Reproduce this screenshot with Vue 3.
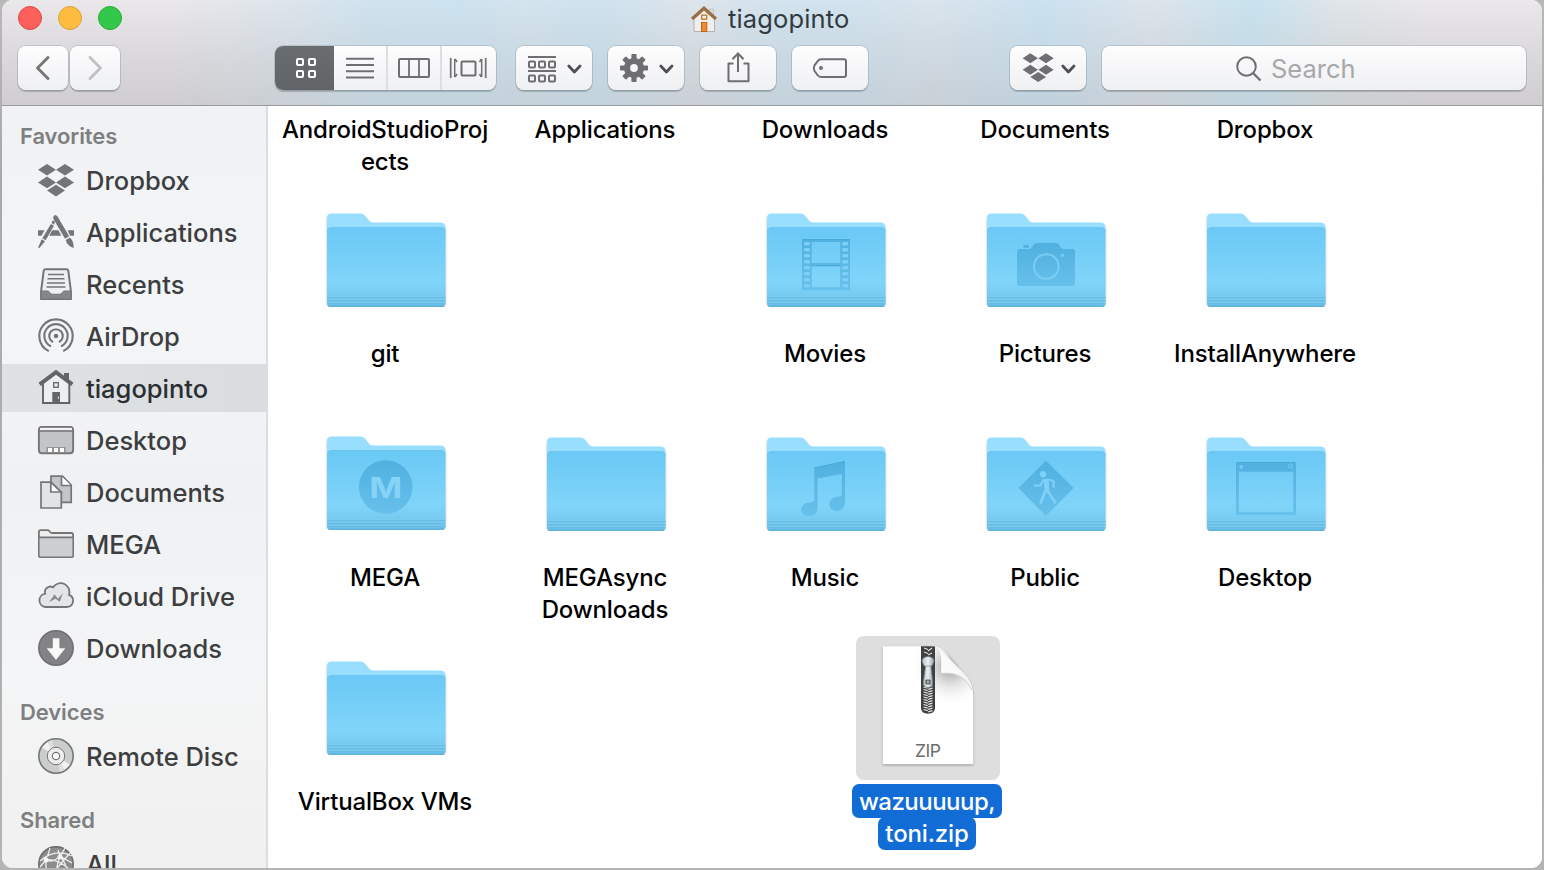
<script setup>
const rhomb = (x, y, w, h) => `M${x - w} ${y}L${x} ${y - h}L${x + w} ${y}L${x} ${y + h}Z`
const chevron = (x) => `<path d="M${x} 20l5.6 6 5.6-6" fill="none" stroke="#505052" stroke-width="2.8" stroke-linecap="round" stroke-linejoin="round"/>`
const cells = (xs, ys, s, color, w) => ys.map((y) => xs.map((x) => `<rect x="${x}" y="${y}" width="${s}" height="${s}" rx="1" fill="none" stroke="${color}" stroke-width="${w}"/>`).join('')).join('')
const teeth = [0, 45, 90, 135, 180, 225, 270, 315].map((a) => `<rect x="23.4" y="8" width="5.2" height="8" rx=".8" transform="rotate(${a} 26 22)"/>`).join('')

const G = '#6f6f71'
const tools = {
  back: `<path d="M30 11.500L19.500 22L30 32.500" fill="none" stroke="#777" stroke-width="3" stroke-linecap="round" stroke-linejoin="round"/>`,
  forward: `<path d="M20 11.500L30.500 22L20 32.500" fill="none" stroke="#c2c2c4" stroke-width="3" stroke-linecap="round" stroke-linejoin="round"/>`,
  grid: cells([22, 34], [13, 25], 6, '#fff', 2),
  list: `<path d="M12 12.800h28M12 19h28M12 25.200h28M12 31.400h28" stroke="${G}" stroke-width="2"/>`,
  columns: `<rect x="11" y="13" width="30" height="18" rx="1" fill="none" stroke="${G}" stroke-width="2"/><path d="M21 13v18M31 13v18" stroke="${G}" stroke-width="1.8"/>`,
  flow: `<g fill="none" stroke="${G}" stroke-width="2"><rect x="20.500" y="15.500" width="14" height="14" rx="1"/><path d="M9.700 12v20M44.700 12v20" stroke-width="1.700"/><path d="M13.700 13v18M40.700 13v18" stroke-width="1.500"/><path d="M14 13l2 3M14 31l2-3M40.500 13l-2 3M40.500 31l-2-3" stroke-width="1.600"/></g>`,
  arrange: `<path d="M12 11h28M12 25h28" stroke="${G}" stroke-width="1.800"/>${cells([13, 23, 33], [15.500, 29.500], 6, G, 2)}${chevron(52.800)}`,
  gear: `<g fill="${G}">${teeth}</g><circle cx="26" cy="22" r="7" fill="none" stroke="${G}" stroke-width="6.200"/>${chevron(52.800)}`,
  share: `<g fill="none" stroke="${G}" stroke-width="2"><path d="M33.500 17.500H28.500V35.300H48.500V17.500H43.500" stroke-linejoin="round"/><path d="M38 8V26M32.500 13.300L38 7.500L43.500 13.300"/></g>`,
  tag: `<path d="M29 13.300H52Q54 13.300 54 15.300V29Q54 31 52 31H29Q27 31 25.500 29L22.500 25Q21 22.200 22.500 19.400L25.500 15.300Q27 13.300 29 13.300Z" fill="none" stroke="${G}" stroke-width="2"/><circle cx="29" cy="22" r="2" fill="${G}"/>`,
  dropbox: `<path fill="${G}" d="${rhomb(20.300, 12.300, 7.700, 5)}${rhomb(36, 12.300, 7.700, 5)}${rhomb(20.300, 23.700, 7.700, 5)}${rhomb(36, 23.700, 7.700, 5)}${rhomb(28.200, 31, 7.900, 5)}"/>${chevron(52.800)}`
}

const S = '#747577'
const side = {
  dropbox: `<path fill="${S}" d="${rhomb(15, 13.700, 9, 5.800)}${rhomb(33, 13.700, 9, 5.800)}${rhomb(15, 26.400, 9, 5.800)}${rhomb(33, 26.400, 9, 5.800)}${rhomb(24, 34.600, 9, 5.800)}"/>`,
  apps: `<g fill="${S}"><path d="M6 22.300h6.500l-3 5.400H6zM20.200 22.300h6.200l3 5.400H17.300zM35.500 22.300H42v5.400h-3.800z"/><path d="M21.300 8.700q1.800-3.200 4.400 0l11.500 19.600-4.200 2.400L21.300 10.700zM33.700 31.900l4.200-2.400q4 3.500 3.700 10.500-6.500-2.500-7.900-8.100z"/><path d="M20.700 12.200l2 1.200-.4 3.300-2.800-1.700zM18.900 16l3 1.800-8.200 14.500-3.400-2zM9.700 31.300l3.300 2-5.600 6.700-1.300-.5z"/></g>`,
  recents: `<path d="M13.500 9.300H34.500Q36 9.300 36.300 10.800L38.900 31V39H9.100V31L11.700 10.800Q12 9.300 13.500 9.300Z" fill="#eeeff0" stroke="${S}" stroke-width="2"/><path d="M9 31H15.500Q17 31 17.700 32.500Q18.500 34.300 20.500 34.300H27.500Q29.500 34.300 30.300 32.500Q31 31 32.500 31H39V38Q39 39 38 39H10Q9 39 9 38Z" fill="#858688" stroke="${S}"/><path d="M16 14.500h16M15.500 18.800h17M15 23h18M14.500 27h19" stroke="${S}" stroke-width="1.600"/>`,
  airdrop: `<g fill="none" stroke="${S}" stroke-width="2.100" stroke-linecap="round"><path d="M16 38.700A16.700 16.700 0 1 1 32 38.700"/><path d="M18.200 34A11.700 11.700 0 1 1 29.800 34"/><path d="M20.300 29.700A6.800 6.800 0 1 1 27.700 29.700"/></g><circle cx="24" cy="24" r="2.300" fill="${S}"/>`,
  home: `<g fill="none" stroke="#626669"><path d="M11 19V39H37.300V19L24 9Z" fill="#eceeef" stroke-width="1.900"/><path d="M7.700 20.300L24 8.200L40.300 20.300" stroke-width="4"/><rect x="21.700" y="18.700" width="4.600" height="4.600" stroke-width="1.300"/></g><path d="M32 9h5v9l-5-4zM20.300 28h7.700v11.500h-7.700z" fill="#626669"/><path d="M26.400 32.500v2.500" stroke="#ddd"/>`,
  desktop: `<rect x="6.900" y="10.900" width="34.200" height="26.300" rx="3" fill="#c3c4c6" stroke="${S}" stroke-width="1.900"/><path d="M8 12h32v2H8z" fill="#f4f4f5"/><path d="M7 15h34" stroke="${S}" stroke-width="1.400"/><rect x="14.500" y="31" width="19.200" height="5" fill="#939496"/><path d="M16 32h4v4h-4zM22 32h4v4h-4zM28 32h4v4h-4z" fill="#fff"/>`,
  docs: `<g stroke="${S}" stroke-width="1.700"><path d="M19 8.200H30.500L39.200 17V34.300H19Z" fill="#c4c5c7"/><path d="M29.500 8.200V17.500H39" fill="#fff"/><path d="M9 14.200H19L29.300 24.500V40H9Z" fill="#e2e3e4"/><path d="M18.800 14.200V24H29Z" fill="#fff"/></g>`,
  folder: `<path d="M6.900 36V12Q6.900 10.200 8.700 10.200H15.500Q17 10.200 17.700 11.500Q18.300 13 20 13H39.300Q41.100 13 41.100 15V36Q41.100 37.200 40 37.200H8Q6.900 37.200 6.900 36Z" fill="#ededee" stroke="${S}" stroke-width="1.800"/><path d="M7.800 17.500h32.400v18.800H7.800z" fill="#cdcecf"/><path d="M7 17.300h34" stroke="${S}" stroke-width="1.700"/>`,
  cloud: `<path d="M13.500 35H35A6.300 6.300 0 0 0 37 22.800A8.800 8.800 0 0 0 21.200 15.300A5.500 5.500 0 0 0 13.200 21.700A6.700 6.700 0 0 0 13.500 35Z" fill="#e4e5e6" stroke="${S}" stroke-width="1.800"/><path d="M17.200 30L22.500 22.200L26 26.800L31 21L27.800 29.800L23.500 26.800Z" fill="#8a8b8c"/>`,
  download: `<circle cx="24" cy="24" r="17.200" fill="#838385" stroke="#6e6e70" stroke-width="1.500"/><path d="M20.300 13.800h7.600v10h6.300L24 36.500 13.800 23.800h6.500z" fill="#f8f8f8" stroke="#747476" stroke-width=".8"/>`,
  disc: `<circle cx="24" cy="24" r="17.200" fill="#cbccce" stroke="${S}" stroke-width="1.600"/><path d="M24 24L10 15.500 15.500 10ZM24 24L38 32.500 32.500 38Z" fill="#f1f1f2"/><path d="M24 24L15.500 10 20 8ZM24 24L32.500 38 28 40Z" fill="#dddedf"/><circle cx="24" cy="24" r="8.700" fill="#eee" stroke="${S}" stroke-width="1"/><circle cx="24" cy="24" r="3.700" fill="#f7f7f7" stroke="${S}" stroke-width="1.200"/>`,
  globe: `<circle cx="24" cy="24" r="17.200" fill="#8b8c8e" stroke="#68696b" stroke-width="1.500"/><g fill="none" stroke="#eee" stroke-width="1.300"><path d="M8 21Q23 8 40 16M13 20Q25 25 33 8M13 20Q17 14 18 8M14 20Q13 33 20 39M28 16Q23 29 25 41M28 16Q35 24 36 35M8 27L14 20M13 20Q25 18 38 30M26 10L28 16L40 23M17 40Q26 26 38 13"/></g><g fill="#f4f4f4"><circle cx="14" cy="20" r="2.500"/><circle cx="28" cy="17" r="2.500"/></g>`
}

const film = [54, 60, 66, 72, 78, 84, 90, 96].map((y) => `<rect x="50" y="${y}" width="6" height="3.600" rx="1.400"/><rect x="88.300" y="${y}" width="6" height="3.600" rx="1.400"/>`).join('')
const glyphs = {
  movies: `<path d="M48 51H96V102.300H48ZM57.700 54V75H86.200V54ZM57.700 78.200V99.300H86.200V78.200Z" fill="url(#ink)" fill-rule="evenodd"/><g fill="#7ccff6">${film}</g><path d="M48 51.500H96M57.700 77.700H86" stroke="#49a9d9" stroke-width="1"/>`,
  pictures: `<path d="M45.500 61H55Q57 61 58.500 58.500Q60 55 63 55H81.500Q84.500 55 86 58.500Q87.500 61 89.500 61H98.500Q101 61 101 63.500V95.500Q101 98 98.500 98H45.500Q43 98 43 95.500V63.500Q43 61 45.500 61ZM50.500 57h3.500q1 0 1 1v1.700h-5.700V58q0-1 1.200-1z" fill="url(#ink)"/><circle cx="72.300" cy="78.500" r="12.300" fill="none" stroke="#7acdf4" stroke-width="2"/><circle cx="88.300" cy="67.300" r="1.700" fill="#7acdf4"/>`,
  mega: `<circle cx="71.700" cy="76" r="26.800" fill="url(#ink)"/><text x="71.700" y="86.500" text-anchor="middle" textLength="33" lengthAdjust="spacingAndGlyphs" font-family="Inter, sans-serif" font-size="28.500" font-weight="700" fill="#86d3f7">M</text>`,
  music: `<path d="M60.300 55.500L91 49V90.500C91 95.500 87.500 99 83 99C78.500 99 75.300 96.300 75.300 92.500C75.300 88 79 84.700 83.500 84.700C86 84.700 87.800 84 87.800 82V62L63.500 66.500V96.500C63.500 101 60 104 55.300 104C50.500 104 47.200 101.500 47.200 97.700C47.200 93.700 50.500 90.700 55 90.700C58.500 90.700 60.300 89.500 60.300 87.500Z" fill="url(#ink)"/><path d="M60.500 56L91 49.500" stroke="#49a9d9"/>`,
  public: `<path d="M72 48.700L99.300 76L72 103.300L44.700 76Z" fill="url(#ink)" stroke="#5fb9e6" stroke-width=".8"/><g fill="none" stroke="#7dd0f6" stroke-linecap="round" stroke-linejoin="round"><path d="M60.800 73.700H66.300L69.500 68M75.500 67.700L79.500 69L79.600 75" stroke-width="2.200"/><path d="M71 79.500L69.500 84L66.800 90.500M73.500 79L77 84L81 90.500" stroke-width="2.900"/><path d="M72.300 69L73 78.500" stroke-width="5"/></g><circle cx="69" cy="62.200" r="3.100" fill="#7dd0f6"/>`,
  desktop: `<path d="M43.500 50H100.500Q102 50 102 51.500V101.500Q102 103 100.500 103H43.500Q42 103 42 101.500V51.500Q42 50 43.500 50ZM44.800 59.700V100.300H99.300V59.700Z" fill="url(#ink)" fill-rule="evenodd"/><path d="M43 50.500H101" stroke="#49a9d9"/><circle cx="47.200" cy="55" r="2" fill="#74c9f2"/><circle cx="96.500" cy="54" r="2" fill="none" stroke="#74c9f2"/><path d="M98 55.500l1.700 1.700" stroke="#74c9f2"/>`
}

const views = [['grid', 59], ['list', 52], ['columns', 52], ['flow', 55]]
const groups = [
  { title: 'Favorites', items: [['Dropbox', 'dropbox'], ['Applications', 'apps'], ['Recents', 'recents'], ['AirDrop', 'airdrop'], ['tiagopinto', 'home'], ['Desktop', 'desktop'], ['Documents', 'docs'], ['MEGA', 'folder'], ['iCloud Drive', 'cloud'], ['Downloads', 'download']] },
  { title: 'Devices', items: [['Remote Disc', 'disc']] },
  { title: 'Shared', items: [['All', 'globe']] }
]
const files = [
  { c: 1, r: 1, lines: ['AndroidStudioProj', 'ects'] }, { c: 2, r: 1, lines: ['Applications'] }, { c: 3, r: 1, lines: ['Downloads'] }, { c: 4, r: 1, lines: ['Documents'] }, { c: 5, r: 1, lines: ['Dropbox'] },
  { c: 1, r: 2, lines: ['git'] }, { c: 3, r: 2, lines: ['Movies'], g: 'movies' }, { c: 4, r: 2, lines: ['Pictures'], g: 'pictures' }, { c: 5, r: 2, lines: ['InstallAnywhere'] },
  { c: 1, r: 3, lines: ['MEGA'], g: 'mega' }, { c: 2, r: 3, lines: ['MEGAsync', 'Downloads'] }, { c: 3, r: 3, lines: ['Music'], g: 'music' }, { c: 4, r: 3, lines: ['Public'], g: 'public' }, { c: 5, r: 3, lines: ['Desktop'], g: 'desktop' },
  { c: 1, r: 4, lines: ['VirtualBox VMs'] }
]
const zipTeeth = Array.from({ length: 12 }, (_, i) => 46 + i * 2.5)
</script>

<template>
  <div class="backdrop">
    <div class="window">
      <header class="chrome">
        <div class="titlebar">
          <div class="lights"><i class="red"></i><i class="amber"></i><i class="green"></i></div>
          <div class="title">
            <svg width="28" height="28" viewBox="0 0 28 28">
              <path d="M19.500 4h4v8h-4z" fill="#d9d9d8" stroke="#bbb" stroke-width=".6" />
              <path d="M4 14L14 5L24.500 14V26.500H4Z" fill="#f1efed" stroke="#a9a5a1" stroke-width=".8" />
              <path d="M2 14L14 3.200L26 14" fill="none" stroke="#9b7048" stroke-width="3.200" />
              <rect x="11.700" y="10.200" width="5" height="4" fill="#f7ede0" stroke="#ca7528" stroke-width="1.300" />
              <rect x="11.500" y="17.500" width="5.300" height="9" fill="#ef8c27" stroke="#b96a20" />
            </svg>
            <span>tiagopinto</span>
          </div>
        </div>
        <div class="toolbar">
          <div class="btn nav"><svg width="50" height="44" v-html="tools.back" /></div>
          <div class="btn nav"><svg width="50" height="44" v-html="tools.forward" /></div>
          <div class="btn views">
            <div v-for="v in views" :key="v[0]" class="view" :class="v[0]"><svg :width="v[1]" height="44" v-html="tools[v[0]]" /></div>
          </div>
          <div v-for="t in ['arrange', 'gear', 'share', 'tag']" :key="t" class="btn tool"><svg width="76" height="44" v-html="tools[t]" /></div>
          <div class="btn box"><svg width="76" height="44" v-html="tools.dropbox" /></div>
          <div class="btn search">
            <svg width="28" height="28" viewBox="0 0 28 28" fill="none" stroke="#707073" stroke-width="2"><circle cx="11.500" cy="11.500" r="9.300" /><path d="M18 18l7.500 7.500" stroke-width="2.300" /></svg>
            <span>Search</span>
          </div>
        </div>
      </header>
      <div class="body">
        <nav class="sidebar">
          <section v-for="g in groups" :key="g.title">
            <h2>{{ g.title }}</h2>
            <div v-for="i in g.items" :key="i[0]" class="item" :class="{ on: i[0] === 'tiagopinto' }">
              <svg width="48" height="48" v-html="side[i[1]]" /><span>{{ i[0] }}</span>
            </div>
          </section>
        </nav>
        <main class="files">
          <div class="grid">
            <div v-for="f in files" :key="f.lines[0] + f.r" class="cell" :class="['c' + f.c, 'r' + f.r]">
              <svg class="icon" :class="f.g" width="144" height="144" viewBox="0 0 144 144">
                <template v-if="f.r > 1">
                  <defs>
                    <linearGradient id="front" x1="0" y1="0" x2="0" y2="1"><stop offset="0" stop-color="#6ac9f5" /><stop offset=".7" stop-color="#80d4f9" /><stop offset=".87" stop-color="#77caef" /><stop offset="1" stop-color="#67bde6" /></linearGradient>
                    <linearGradient id="ink" x1="0" y1="0" x2="0" y2="1"><stop offset="0" stop-color="#50b0df" /><stop offset="1" stop-color="#66c0eb" /></linearGradient>
                  </defs>
                  <g transform="translate(.07 0) scale(.995 1)">
                    <path class="back" d="M13 115V30Q13 25.500 17.500 25.500H47Q50 25.500 51.500 28L55 32.500Q56.500 34.500 59 34.500H127Q132 34.500 132 39.500V115Z" />
                    <path d="M13 43Q13 39.500 17 39.500H128Q132 39.500 132 43V115.500Q132 118.700 129 118.700H16Q13 118.700 13 115.500Z" fill="url(#front)" />
                    <path d="M13.500 42.500Q14 39.500 17 39.500H128Q131 39.500 131.500 42.500" fill="none" stroke="#66c1ec" stroke-width=".8" />
                    <path d="M13 109.500H132M13 112.500H132M13 115.500H132" stroke="#68bce4" stroke-width="1" />
                    <path d="M13 108.500H132M13 111.500H132M13 114.500H132" stroke="#7dccef" stroke-width=".7" />
                    <path d="M14.500 118.300H130.500" stroke="#55aad3" stroke-width="1" />
                  </g>
                  <g v-if="f.g" v-html="glyphs[f.g]" />
                </template>
              </svg>
              <div class="label"><div v-for="l in f.lines" :key="l"><span>{{ l }}</span></div></div>
            </div>
            <div class="cell zip">
              <svg class="icon sel" width="144" height="144" viewBox="0 0 144 144">
                <defs>
                  <linearGradient id="fold" x1="0" y1="1" x2="1" y2="0"><stop offset="0" stop-color="#fff" /><stop offset=".5" stop-color="#fafafa" /><stop offset="1" stop-color="#ccc" /></linearGradient>
                  <linearGradient id="metal" x1="0" y1="0" x2="1" y2="0"><stop offset="0" stop-color="#b3bcc0" /><stop offset=".5" stop-color="#eef1f2" /><stop offset="1" stop-color="#9aa4a8" /></linearGradient>
                  <radialGradient id="shade" gradientUnits="userSpaceOnUse" cx="94" cy="31" r="40"><stop offset="0" stop-color="#a2a2a2" /><stop offset=".4" stop-color="#dcdcdc" /><stop offset="1" stop-color="#fff" stop-opacity="0" /></radialGradient>
                  <clipPath id="sheet"><path d="M26.700 10.300H76Q87 10.300 94 20L108 37Q117.300 47 117.300 60V128.300H26.700Z" /></clipPath>
                </defs>
                <path class="paper" d="M26.700 10.300H76Q87 10.300 94 20L108 37Q117.300 47 117.300 60V128.300H26.700Z" />
                <g clip-path="url(#sheet)">
                  <path d="M26 10H118V75H26Z" fill="url(#shade)" />
                  <path d="M65 8H79V72Q79 77.700 72 77.700Q65 77.700 65 72Z" fill="#3f4042" />
                  <path v-for="y in zipTeeth" :key="y" :d="`M67.500 ${y}l4.300 1.200M76.500 ${y + 1.2}l-4.300 1.200`" stroke="#e2e2e2" stroke-width="1.200" />
                  <path d="M68 12l4 1.500M76 12l-4 3M68 16l4 1.500M76 17l-4 2" stroke="#ddd" stroke-width="1.300" />
                </g>
                <path d="M66 25Q66 21 72 20.500Q78 21 78 25Q77 29 74.500 31H69.500Q67 29 66 25Z" fill="url(#metal)" stroke="#6e777b" stroke-width=".5" />
                <path d="M69.500 30H75L76.800 46Q76.800 51.500 72 51.500Q67 51.500 67.300 46Z" fill="url(#metal)" stroke="#697175" stroke-width=".6" />
                <circle cx="72" cy="46" r="2.800" fill="#46494b" /><path d="M72 43v6M69.500 46h5" stroke="#ddd" stroke-width=".8" />
                <path d="M79 10.500Q85 11.500 85.200 24V37.500Q95 36 104 40.500Q110 43.500 116 54Q115 45 107.500 37L93.500 22.500Q86 12 79 10.500Z" fill="url(#fold)" />
                <path d="M85.200 37.500Q99 35.500 108 43Q112 46.500 116 54" fill="none" stroke="#c6c6c6" stroke-width=".8" />
                <text x="72" y="120.500" text-anchor="middle" textLength="26" font-family="Inter, sans-serif" font-size="17.500" fill="#6d6d6d">ZIP</text>
              </svg>
              <div class="label picked"><div><span>wazuuuuup,</span></div><div><span>toni.zip</span></div></div>
            </div>
          </div>
        </main>
      </div>
    </div>
  </div>
</template>

<style scoped>
.backdrop { box-sizing: border-box; width: 1544px; height: 870px; padding: 0 2px 2px; overflow: hidden; background: linear-gradient(#b9b9ba, #a9a9aa 20%, #b4b4b5); font-family: Inter, "Liberation Sans", sans-serif; }
.window { height: 868px; border-radius: 11px; overflow: hidden; background: #fff; display: flex; flex-direction: column; }
.chrome { box-sizing: border-box; height: 106px; flex: none; border-bottom: 1px solid #97999b; background: linear-gradient(rgba(200, 198, 200, 0), rgba(200, 198, 200, .2)), linear-gradient(90deg, rgba(176, 221, 243, 0) 170px, rgba(176, 221, 243, .22) 290px, rgba(176, 221, 243, .46) 370px, rgba(176, 221, 243, .5) 460px, rgba(176, 221, 243, .36) 525px, rgba(176, 221, 243, .5) 590px, rgba(186, 221, 238, .25) 690px, rgba(176, 221, 243, .42) 780px, rgba(176, 221, 243, .42) 850px, rgba(176, 221, 243, .26) 930px, rgba(172, 219, 245, .5) 1040px, rgba(186, 221, 238, .26) 1150px, rgba(170, 223, 243, .52) 1250px, rgba(190, 223, 228, .25) 1330px, rgba(220, 223, 228, 0) 1420px), linear-gradient(#eae8eb, #d1cfd2); }
.titlebar { height: 36px; position: relative; }
.lights { display: flex; gap: 16px; padding: 6px 0 0 16px; }
.lights i { box-sizing: border-box; width: 24px; height: 24px; border-radius: 50%; border: 1px solid; }
.lights .red { background: #fc605c; border-color: #df4744; }
.lights .amber { background: #fdbc40; border-color: #de9f34; }
.lights .green { background: #34c84a; border-color: #27aa35; }
.title { position: absolute; left: 688px; top: 5px; display: flex; align-items: center; gap: 10px; font-size: 25.5px; letter-spacing: .15px; line-height: 28px; color: #303a40; }
.toolbar { display: flex; padding: 10px 0 0 16px; }
.btn { height: 44px; flex: none; border-radius: 8px; background: linear-gradient(#fdfdfe, #eff0f2); box-shadow: 0 0 0 1px rgba(80, 100, 115, .2), 0 1.5px 1px rgba(0, 0, 0, .18); overflow: hidden; }
svg { display: block; flex: none; }
.nav { width: 50px; margin-right: 2px; }
.views { display: flex; width: 221px; margin: 0 20px 0 153px; }
.view { box-sizing: border-box; border-left: 2px solid #dcdee0; overflow: hidden; width: 54px; }
.view.grid { width: 59px; border: 0; background: linear-gradient(#696d70, #616467); }
.view.list { width: 52px; border-left: 0; }
.view.flow { width: 56px; }
.flow svg { margin-left: -1px; }
.tool { width: 76px; margin-right: 16px; }
.box { width: 76px; margin: 0 16px 0 126px; }
.search { width: 424px; display: flex; align-items: center; gap: 8px; box-sizing: border-box; padding: 0 0 0 133px; font-size: 25.5px; color: #a7a8a9; }
.search svg { margin-top: 2px; }
.body { flex: 1; min-height: 0; display: flex; }
.sidebar { box-sizing: border-box; width: 266px; flex: none; border-right: 2px solid #dcddde; background: linear-gradient(180deg, #f0f2f3, #f3f5f7 30%, #f0f1f3 50%, #f4f5f6 75%, #f0f0f0); overflow: hidden; padding-top: 14px; }
section { margin-bottom: 24px; }
h2 { margin: 0 0 4px; padding-left: 18px; height: 32px; line-height: 32px; font-size: 22px; font-weight: 600; letter-spacing: -.1px; color: #7e7f81; }
.item { height: 48px; margin-bottom: 4px; padding-left: 30px; display: flex; align-items: center; gap: 6px; font-size: 25.5px; font-weight: 450; color: #3d3e40; white-space: nowrap; }
.item.on { background: linear-gradient(90deg, #dfe2e5, #dadde0); color: #2b2e30; }
.files { flex: 1; min-width: 0; overflow: hidden; background: #fff; }
.files .grid { display: grid; grid-template-columns: repeat(5, 220px); grid-template-rows: repeat(4, 224px); margin: -142px 0 0 8px; }
.cell { display: flex; flex-direction: column; align-items: center; gap: 6px; }
.icon { overflow: visible; }
.mega { margin: -1px 0 1px; }
.c1 { grid-column: 1; } .c2 { grid-column: 2; } .c3 { grid-column: 3; } .c4 { grid-column: 4; } .c5 { grid-column: 5; }
.r1 { grid-row: 1; } .r2 { grid-row: 2; } .r3 { grid-row: 3; } .r4 { grid-row: 4; }
.back { fill: #98defe; filter: drop-shadow(0 2px 1px rgba(0, 0, 0, .28)); }
.label { text-align: center; font-size: 24px; font-weight: 450; letter-spacing: -.15px; line-height: 32px; color: #000; white-space: nowrap; padding-right: 2px; }
.zip { grid-column: 3 / 5; grid-row: 4; margin-right: 16px; gap: 4px; }
.sel { background: #dedede; border-radius: 8px; }
.paper { fill: #fff; filter: drop-shadow(0 1px 1.2px rgba(0, 0, 0, .35)); }
.picked { color: #fff; font-weight: 500; padding-right: 2px; }
.picked span { display: inline-block; background: #116cd6; border-radius: 7px; padding: 0 7px; }
.picked div { height: 33px; }
.picked div:first-child span { height: 34px; line-height: 35px; letter-spacing: -.5px; }
.picked div:last-child span { height: 33px; line-height: 34px; }
</style>

<style>
html, body { margin: 0; overflow: hidden; }
</style>
